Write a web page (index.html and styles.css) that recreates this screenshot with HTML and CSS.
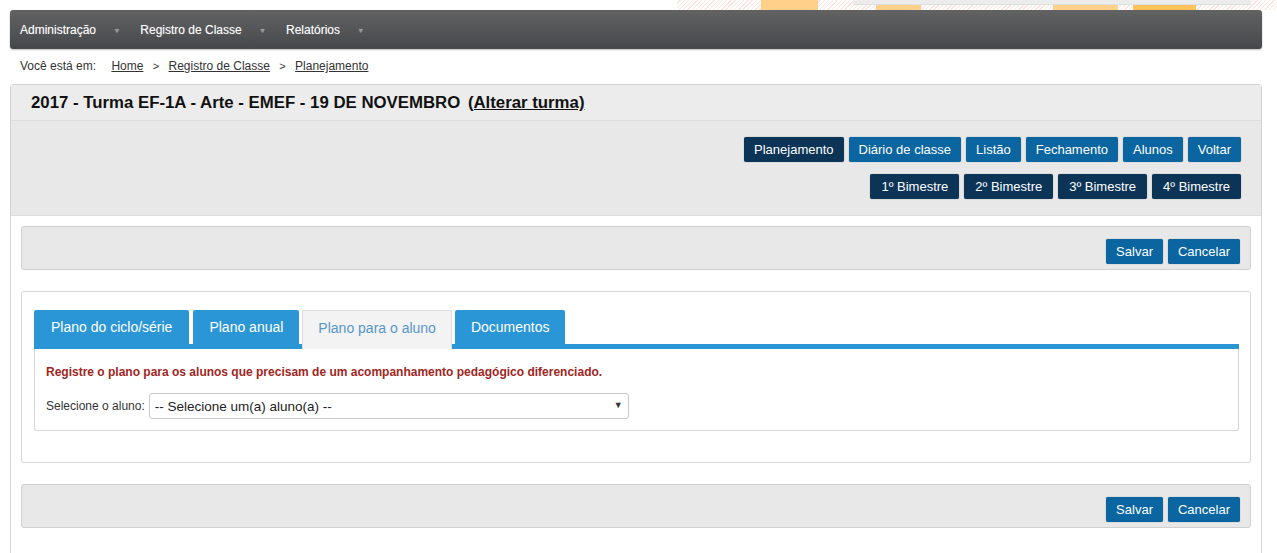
FILE: index.html
```html
<!DOCTYPE html>
<html lang="pt-BR">
<head>
    <meta charset="UTF-8">
    <title>Registro de Classe - Planejamento</title>
    <link rel="stylesheet" href="styles.css">
</head>
<body>
    <!-- faixa do cabeçalho (cortada no topo) -->
    <div class="topo">
        <div class="topo-listras">
            <span class="bloco bloco-1"></span>
            <div class="topo-aviso">
                <div class="aviso-caixa"></div>
                <div class="aviso-blocos">
                    <span class="bloco bloco-2"></span>
                    <span class="bloco bloco-3"></span>
                    <span class="bloco bloco-4"></span>
                </div>
            </div>
        </div>
    </div>

    <div class="pagina">
        <nav class="menu">
            <a href="#" class="menu-item">Administração <span class="seta">▼</span></a>
            <a href="#" class="menu-item">Registro de Classe <span class="seta">▼</span></a>
            <a href="#" class="menu-item">Relatórios <span class="seta">▼</span></a>
        </nav>

        <div class="breadcrumb">
            <span class="breadcrumb-label">Você está em:</span>
            <a href="#">Home</a>
            <span class="sep">&gt;</span>
            <a href="#">Registro de Classe</a>
            <span class="sep">&gt;</span>
            <a href="#">Planejamento</a>
        </div>

        <div class="painel">
            <div class="painel-titulo">
                <h1>2017 - Turma EF-1A - Arte - EMEF - 19 DE NOVEMBRO <a href="#">(Alterar turma)</a></h1>
            </div>

            <div class="painel-acoes">
                <div class="linha-botoes">
                    <button class="btn btn-escuro">Planejamento</button>
                    <button class="btn">Diário de classe</button>
                    <button class="btn">Listão</button>
                    <button class="btn">Fechamento</button>
                    <button class="btn">Alunos</button>
                    <button class="btn">Voltar</button>
                </div>
                <div class="linha-botoes bimestres">
                    <button class="btn btn-escuro">1º Bimestre</button>
                    <button class="btn btn-escuro">2º Bimestre</button>
                    <button class="btn btn-escuro">3º Bimestre</button>
                    <button class="btn btn-escuro">4º Bimestre</button>
                </div>
            </div>

            <div class="painel-corpo">
                <div class="barra-acoes">
                    <button class="btn">Salvar</button>
                    <button class="btn">Cancelar</button>
                </div>

                <div class="caixa">
                    <ul class="abas">
                        <li class="aba aba-larga">Plano do ciclo/série</li>
                        <li class="aba">Plano anual</li>
                        <li class="aba ativa">Plano para o aluno</li>
                        <li class="aba aba-estreita">Documentos</li>
                    </ul>
                    <div class="aba-conteudo">
                        <p class="aviso">Registre o plano para os alunos que precisam de um acompanhamento pedagógico diferenciado.</p>
                        <div class="campo">
                            <label for="aluno">Selecione o aluno:</label>
                            <div class="select-wrap">
                                <select id="aluno">
                                    <option>-- Selecione um(a) aluno(a) --</option>
                                </select>
                                <span class="select-seta">▼</span>
                            </div>
                        </div>
                    </div>
                </div>

                <div class="barra-acoes">
                    <button class="btn">Salvar</button>
                    <button class="btn">Cancelar</button>
                </div>
            </div>
        </div>
    </div>
</body>
</html>
```

FILE: styles.css
```css
/* Base */
* {
    margin: 0;
    padding: 0;
    box-sizing: border-box;
}

body {
    font-family: "Liberation Sans", Arial, sans-serif;
    font-size: 12px;
    color: #333;
    background-color: #fff;
    overflow: hidden;
}

/* Faixa do topo */
.topo {
    height: 10px;
    overflow: hidden;
    display: flex;
    justify-content: flex-end;
}

.topo-listras {
    width: 600px;
    height: 10px;
    display: flex;
    background: repeating-linear-gradient(135deg, #fff 0, #fff 2px, #fde3dd 2px, #fde3dd 3px);
}

.bloco {
    display: block;
    height: 10px;
    background-color: #ffd08a;
}

.bloco-1 {
    width: 57px;
    margin-left: 84px;
}

.topo-aviso {
    margin-left: 35px;
    width: 398px;
}

.aviso-caixa {
    height: 5px;
    background-color: #ececec;
    border-bottom: 1px solid #e0e0e0;
}

.aviso-blocos {
    display: flex;
    height: 5px;
}

.aviso-blocos .bloco {
    height: 5px;
}

.bloco-2 {
    width: 45px;
    margin-left: 23px;
}

.bloco-3 {
    width: 65px;
    margin-left: 132px;
}

.bloco-4 {
    width: 63px;
    margin-left: 15px;
    background-color: #ffc15a;
}

/* Página */
.pagina {
    width: 1252px;
    margin-left: 10px;
}

/* Menu */
.menu {
    height: 39px;
    display: flex;
    align-items: center;
    padding-left: 10px;
    border-radius: 3px;
    background: linear-gradient(to bottom, #626262, #45484b);
    box-shadow: 0 1px 2px rgba(0, 0, 0, 0.25);
}

.menu-item {
    color: #fff;
    text-decoration: none;
    font-size: 12px;
    margin-right: 20px;
    text-shadow: 0 0 1px rgba(255, 255, 255, 0.35);
}

.seta {
    color: #9a9a9a;
    font-size: 7px;
    margin-left: 14px;
    vertical-align: 1px;
}

/* Breadcrumb */
.breadcrumb {
    padding: 10px 0 10px 10px;
    height: 35px;
    line-height: 15px;
    font-size: 12px;
    color: #333;
}

.breadcrumb-label {
    margin-right: 12px;
}

.breadcrumb a {
    color: #333;
}

.breadcrumb .sep {
    margin: 0 6px;
    font-size: 11px;
}

/* Painel principal */
.painel {
    border: 1px solid #d2d2d2;
    border-radius: 3px 3px 0 0;
    height: 480px;
}

.painel-titulo {
    height: 36px;
    background-color: #ececec;
    padding: 0 20px;
    display: flex;
    align-items: center;
    border-bottom: 1px solid #dcdcdc;
}

.painel-titulo h1 {
    font-size: 16.8px;
    color: #111;
    font-weight: bold;
}

.painel-titulo h1 a {
    color: #111;
    margin-left: 3px;
}

.painel-acoes {
    background-color: #e8e8e8;
    padding: 16px 20px 16px 0;
    display: flex;
    flex-direction: column;
    gap: 12px;
    border-bottom: 1px solid #dcdcdc;
}

.linha-botoes {
    display: flex;
    justify-content: flex-end;
    gap: 5px;
}

.bimestres .btn {
    padding: 0 11px;
}

/* Botões */
.btn {
    height: 25px;
    padding: 0 10px;
    border: none;
    border-radius: 2px;
    background-color: #0a65a1;
    color: #fff;
    font-family: "Liberation Sans", Arial, sans-serif;
    font-size: 13px;
    cursor: pointer;
    box-shadow: 0 0 1px rgba(0, 0, 0, 0.5);
}

.btn:hover {
    background-color: #08578b;
}

.btn-escuro {
    background-color: #0c3457;
}

/* Corpo */
.painel-corpo {
    padding: 10px;
    display: flex;
    flex-direction: column;
    gap: 21px;
}

.barra-acoes {
    height: 44px;
    background-color: #e8e8e8;
    border: 1px solid #d0d0d0;
    border-radius: 3px;
    display: flex;
    justify-content: flex-end;
    gap: 5px;
    padding: 12px 10px 0 0;
}

.caixa {
    border: 1px solid #d6d6d6;
    border-radius: 3px;
    padding: 18px 11px 31px 12px;
}

/* Abas */
.abas {
    list-style: none;
    display: flex;
    gap: 3px;
    border-bottom: 5px solid #2b96d6;
}

.aba {
    height: 39px;
    margin-bottom: -5px;
    padding: 0 16px;
    line-height: 34px;
    font-size: 14px;
    color: #fff;
    background-color: #2b96d6;
    border-radius: 2px 2px 0 0;
    cursor: pointer;
}

.aba-larga {
    padding: 0 17px;
    margin-right: 1px;
}

.aba-estreita {
    padding: 0 15px 0 16px;
}

.aba.ativa {
    padding: 0 15px;
    background-color: #f3f3f3;
    color: #5696cc;
    border: 1px solid #dcdcdc;
    border-bottom: none;
}

.aba-conteudo {
    border: 1px solid #d6d6d6;
    border-top: none;
    border-radius: 0 0 3px 3px;
    padding: 15px 11px 11px;
}

.aviso {
    color: #a0261d;
    font-weight: bold;
    font-size: 12px;
    line-height: 16px;
    margin-bottom: 13px;
}

.campo {
    display: flex;
    align-items: center;
    gap: 4px;
}

.campo label {
    font-size: 12px;
    color: #333;
}

.select-wrap {
    position: relative;
}

.select-wrap select {
    width: 480px;
    height: 26px;
    border: 1px solid #c8c8c8;
    border-radius: 3px;
    background-color: #fff;
    padding-left: 5px;
    font-family: "Liberation Sans", Arial, sans-serif;
    font-size: 13.5px;
    color: #222;
    appearance: none;
    -webkit-appearance: none;
}

.select-seta {
    position: absolute;
    right: 6px;
    top: 7px;
    font-size: 9px;
    color: #333;
    pointer-events: none;
}
```
